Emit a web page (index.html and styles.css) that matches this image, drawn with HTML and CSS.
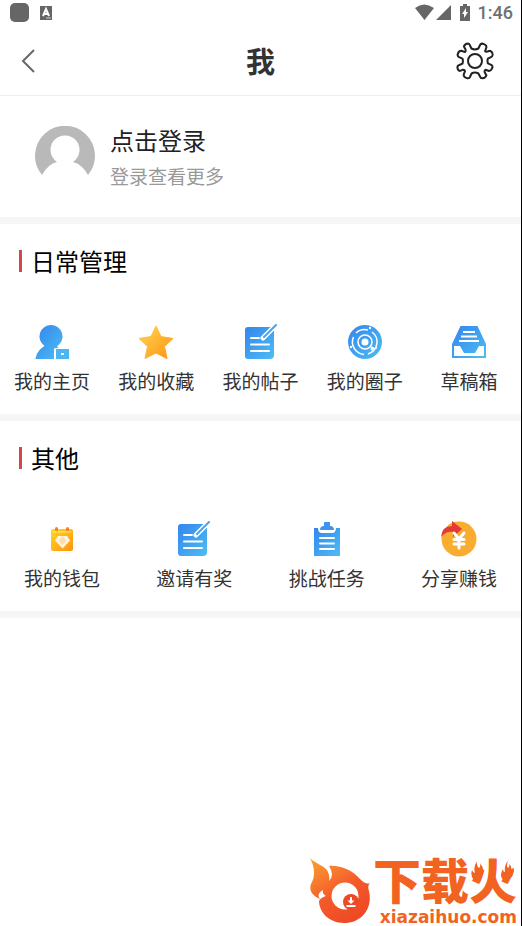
FILE: index.html
```html
<!DOCTYPE html>
<html lang="zh-CN">
<head>
<meta charset="utf-8">
<meta name="viewport" content="width=device-width, initial-scale=1">
<title>我</title>
<link rel="stylesheet" href="styles.css">
</head>
<body>
<svg class="defs" aria-hidden="true">
  <defs>
    <linearGradient id="blue" x1="0" y1="0" x2="1" y2="1"><stop offset="0" stop-color="#3485ec"/><stop offset="1" stop-color="#4dbdf4"/></linearGradient>
    <linearGradient id="gold" x1="0" y1="0" x2="1" y2="1"><stop offset="0.3" stop-color="#ffc340"/><stop offset="1" stop-color="#ff9212"/></linearGradient>
    <linearGradient id="wallet" x1="0" y1="0" x2="1" y2="1"><stop offset="0" stop-color="#ffd820"/><stop offset="1" stop-color="#ff9212"/></linearGradient>
    <linearGradient id="flame" x1="0" y1="0" x2="0.6" y2="1"><stop offset="0" stop-color="#fba333"/><stop offset="0.6" stop-color="#f4592a"/><stop offset="1" stop-color="#ee4a25"/></linearGradient>
    <symbol id="note" viewBox="0 0 36 36">
      <path fill="url(#blue)" d="M5 3h26v28a4 4 0 0 1-4 4H5a3 3 0 0 1-3-3V6a3 3 0 0 1 3-3z"/>
      <path fill="none" stroke="#fff" stroke-width="2" stroke-linecap="round" d="M8 14h8M8 20.500h18M8 27h18"/>
      <path fill="none" stroke="#fff" stroke-width="5" stroke-linecap="round" d="M20 14 32 2"/>
      <path fill="none" stroke="#46a5f1" stroke-width="2" stroke-linecap="round" d="M21 13 33 1"/>
    </symbol>
  </defs>
</svg>
<div class="app">
  <div class="status">
    <svg width="42" height="20" viewBox="0 0 42 20"><rect width="19" height="19" rx="5" fill="#666"/><path fill="#666" d="M30 3h12v14H30z"/><path fill="none" stroke="#fff" stroke-width="2" d="m33 13 3-7 3 7M34 11h4"/><path stroke="#ccc" d="M36 15h5"/></svg>
    <div class="status-right">
      <svg width="56" height="18" viewBox="0 0 56 18"><path fill="#666" d="M0 4q9-7 19 0l-9.500 12zM21 16 36 1v15zM45 2h3V0h4v2h3v15H45z"/><path fill="#fff" d="m51 4-4 6h2v4l4-6h-2z"/></svg>
      <span>1:46</span>
    </div>
  </div>
  <header class="header">
    <button class="icon-button" aria-label="返回"><svg width="16" height="26" viewBox="0 0 16 26"><path fill="none" stroke="#686868" stroke-width="2" d="M13 2 2 13l11 11"/></svg></button>
    <h1>我</h1>
    <button class="icon-button" aria-label="设置"><svg width="38" height="38" viewBox="0 0 38 38"><g fill="none" stroke="#222" stroke-width="2"><circle cx="19" cy="19" r="7"/><path stroke-linejoin="round" d="M15.400 6.500Q18.900 8.300 22.400 6.500L24.300 2.500Q25.800 1 27.900 2.100Q30.600 3.100 30.400 5.300L29.100 9.200Q30.200 10.200 33 9L34.500 9Q36.500 10 36.700 12.500Q36.500 14.300 35.500 14.800L31.900 16.600Q31.100 19 31.900 21.400L35.700 23.200Q37.200 24.900 35.900 26.700Q35 29 33 29L29.500 27.800Q28 28.800 28.900 30.800L30.400 33.300Q29.500 36.200 26.400 36.300Q24.600 36.500 24 34.500L22.400 31.500Q19 29.700 15.600 31.500L13.800 35.300Q12.500 37 10.400 35.900Q7.500 35 7.700 32.700L9 29.100Q8.800 27.600 6.500 27.800L4 28.900Q1.700 28.500 1.400 25.300Q1.300 23.500 3.300 23L6.500 21.600Q7.300 19 6.500 16.600L2.500 14.800Q1 13.300 2.100 11.300Q3 8.700 5.300 8.800L9 10.100Q10.200 9 9.200 6.700L7.900 4.400Q9 1.800 12 1.600Q13.500 1.600 14 3.500z"/></g></svg></button>
  </header>
  <main>
    <a class="profile" href="#login">
      <svg width="60" height="60" viewBox="0 0 60 60"><path fill="#b9b9b9" d="M7 49A30 30 0 1 1 53 49Q47 38 38 36A14.500 14.500 0 1 0 22 36Q13 38 7 49z"/></svg>
      <span class="profile-text"><strong>点击登录</strong><span>登录查看更多</span></span>
    </a>
    <section class="panel">
      <h2>日常管理</h2>
      <nav class="menu menu-even">
        <a href="#home"><svg width="36" height="36" viewBox="0 0 36 36"><path fill="url(#blue)" d="M17 1a11.500 11.500 0 0 1 6.500 21q-1 1 2 2.500H20V35H1.500c1-6 4-10 9-13A11.500 11.500 0 0 1 17 1z"/><path fill="#4bb6f3" stroke="#fff" d="M21.500 24.500h14v11h-14z"/><path fill="#fff" d="M27 29h3v2h-3z"/></svg><span>我的主页</span></a>
        <a href="#favorites"><svg width="36" height="36" viewBox="0 0 36 36"><path fill="url(#gold)" stroke="url(#gold)" stroke-width="1" stroke-linejoin="round" d="m18 2 5 10.500 12 2-8.500 8L29 34.500 18 29 7 34.500 9.500 22.500l-8.500-8 12-2z"/></svg><span>我的收藏</span></a>
        <a href="#posts"><svg width="36" height="36"><use href="#note"/></svg><span>我的帖子</span></a>
        <a href="#circles"><svg width="36" height="36" viewBox="0 0 36 36"><circle cx="18" cy="18" r="17" fill="url(#blue)"/><g fill="none" stroke="#fff" stroke-width="1.500"><circle cx="18" cy="18" r="7"/><path d="M21 6A12.500 12.500 0 0 0 9 9M6.500 13A12.500 12.500 0 0 0 17 30.500M21 30A12.500 12.500 0 0 0 25 8M28 25l-4-2"/></g><g fill="#fff"><circle cx="18" cy="18" r="3.500"/><circle cx="23" cy="4" r="1.200"/><circle cx="4" cy="23" r="1.200"/><circle cx="25" cy="25" r="1.500"/><circle cx="29" cy="24" r="1"/></g></svg><span>我的圈子</span></a>
        <a href="#drafts"><svg width="36" height="36" viewBox="0 0 36 36"><path fill="url(#blue)" d="M9.500 2h17L35 20v14H1V20z"/><path fill="#fff" d="M3 22h6l4 7h11l4-7h5v10H3z"/><path stroke="#fff" stroke-width="2" d="M12 8h12M10 12.500h16M8 17h20"/></svg><span>草稿箱</span></a>
      </nav>
    </section>
    <section class="panel">
      <h2>其他</h2>
      <nav class="menu menu-spread">
        <a href="#wallet"><svg width="36" height="36" viewBox="0 0 36 36"><path fill="url(#wallet)" d="M9 8h18a2 2 0 0 1 2 2v18a2 2 0 0 1-2 2H9a2 2 0 0 1-2-2V10a2 2 0 0 1 2-2z"/><path stroke="#ffec64" d="M9 11h18"/><path stroke="#ff7922" stroke-width="3" stroke-linecap="round" d="M12.500 7.500v1M23.500 7.500v1"/><path fill="#fff4e4" d="M14 15h9l3 4.500-7.500 8-7.500-8z"/><path fill="#ffdcae" d="m18.500 15-4 5 4 4 4-4z"/></svg><span>我的钱包</span></a>
        <a href="#invite"><svg width="36" height="36"><use href="#note"/></svg><span>邀请有奖</span></a>
        <a href="#tasks"><svg width="36" height="36" viewBox="0 0 36 36"><path fill="url(#blue)" d="M5 7h4q0 5 4 5h10q4 0 4-5h4v28H5z"/><path fill="#3e93ee" d="M15 1h6v4q4 0 4 4H11q0-4 4-4z"/><path stroke="#fff" stroke-width="2" stroke-linecap="round" d="M11 17h14M11 22.500h14M11 28h14"/></svg><span>挑战任务</span></a>
        <a href="#share"><svg width="36" height="36" viewBox="0 0 36 36"><circle cx="18" cy="18" r="17.500" fill="#f9ad30"/><path fill="#e43839" d="M0 16Q1 5 11 5V0l10 8-9 8v-5Q5 10 0 16z"/><path fill="none" stroke="#fff" stroke-width="3" stroke-linecap="round" d="m13 12 5 6 5-6M18 18v9M13 18.500h10M13 23h10"/></svg><span>分享赚钱</span></a>
      </nav>
    </section>
  </main>
  <footer class="brand">
    <svg width="62" height="66" viewBox="0 0 62 66"><path fill="url(#flame)" d="M1 0C5 5 17 8 19 14Q21 19 20 23Q26 17 20 8C31 7 43 12 51 21Q57 27 61 25Q58 28 60 33C64 50 53 65 35 65C20 65 10 54 10 43Q11 40 17 38Q13 36 14 32Q7 36 11 41C0 36 0 29 3 24Q8 14 1 0z"/><circle cx="36" cy="38" r="13.500" fill="#fff"/><circle cx="42" cy="44" r="8" fill="#ee4926"/><path fill="none" stroke="#fff" stroke-width="2" d="M42 39v5M37.500 48h9"/><path fill="#fff" d="M38.500 42.500h7L42 46z"/></svg>
    <div class="brand-text">
      <strong>下载<span class="fire">火<svg class="sparks" viewBox="0 0 44 20" aria-hidden="true"><path fill="#f26322" d="M6 0q-1 5 2 7 2-2 1-5 5 6 2 11-3 6-8 6-4-4-2-10 1 3 3 3-2-6 2-12zM37 0q-2 5 0 7 2-1 1-4 3 2 2 5l3-1q0 11-8 12-5 0-5-5 0-3 2-6 0 3 2 3-1-7 3-11z"/></svg></span></strong>
      <span class="brand-url">xiazaihuo.com</span>
    </div>
  </footer>
</div>
</body>
</html>
```

FILE: styles.css
```css
* { box-sizing: border-box; }
body {
  margin: 0;
  font-family: "Noto Sans CJK SC", sans-serif;
  color: #333;
  background: #fff;
}
.defs { position: absolute; width: 0; height: 0; }
svg { display: block; flex: none; }
a { color: inherit; text-decoration: none; }
.app {
  min-height: 100vh;
  display: flex;
  flex-direction: column;
  border-right: 1px solid #000;
}
.status {
  height: 26px;
  padding: 0 8px 0 10px;
  display: flex;
  align-items: center;
  justify-content: space-between;
}
.status-right {
  display: flex;
  align-items: center;
  gap: 7px;
  font: 500 18px/26px Roboto, sans-serif;
  color: #707070;
}
.header {
  height: 70px;
  padding: 0 21px;
  display: grid;
  grid-template-columns: 1fr auto 1fr;
  align-items: center;
  border-bottom: 1px solid #eee;
}
.header h1 { margin: 0; padding-bottom: 2px; font-size: 29px; line-height: 40px; font-weight: 700; }
.icon-button { padding: 0; border: 0; background: none; justify-self: start; }
.icon-button:last-child { justify-self: end; padding-right: 6px; }
.profile {
  height: 128px;
  padding: 30px 35px;
  display: flex;
  gap: 15px;
  border-bottom: 7px solid #f6f6f6;
}
.profile-text { display: flex; flex-direction: column; gap: 6px; font-size: 19px; line-height: 32px; color: #999; }
.profile-text strong { font-size: 24px; line-height: 28px; font-weight: 400; color: #222; }
.panel { padding-top: 20px; border-bottom: 7px solid #f6f6f6; }
.panel h2 {
  margin: 0 0 46px;
  padding-left: 19px;
  display: flex;
  align-items: center;
  gap: 9px;
  font-size: 24px;
  line-height: 34px;
  font-weight: 400;
  color: #000;
}
.panel h2::before { content: ""; width: 3px; height: 22px; background: #d9434b; }
.menu { display: flex; padding-bottom: 20px; }
.menu a {
  display: flex;
  flex-direction: column;
  align-items: center;
  gap: 8px;
  font-size: 19px;
  line-height: 26px;
  white-space: nowrap;
}
.menu-even a { flex: 1; }
.menu-spread { justify-content: space-between; padding-left: 24px; padding-right: 24px; }
.brand {
  margin-top: auto;
  padding: 0 4px 2px 0;
  display: flex;
  align-items: flex-end;
  justify-content: flex-end;
  gap: 2px;
  color: #f26322;
}
.brand-text { display: flex; flex-direction: column; align-items: flex-end; gap: 4px; }
.brand-text strong { font-size: 48px; line-height: 56px; font-weight: 900; }
.brand-url { font: 700 17px/14px "DejaVu Sans", sans-serif; }
.fire { position: relative; }
.sparks { position: absolute; left: 2px; top: 18px; width: 44px; height: 20px; }
```
